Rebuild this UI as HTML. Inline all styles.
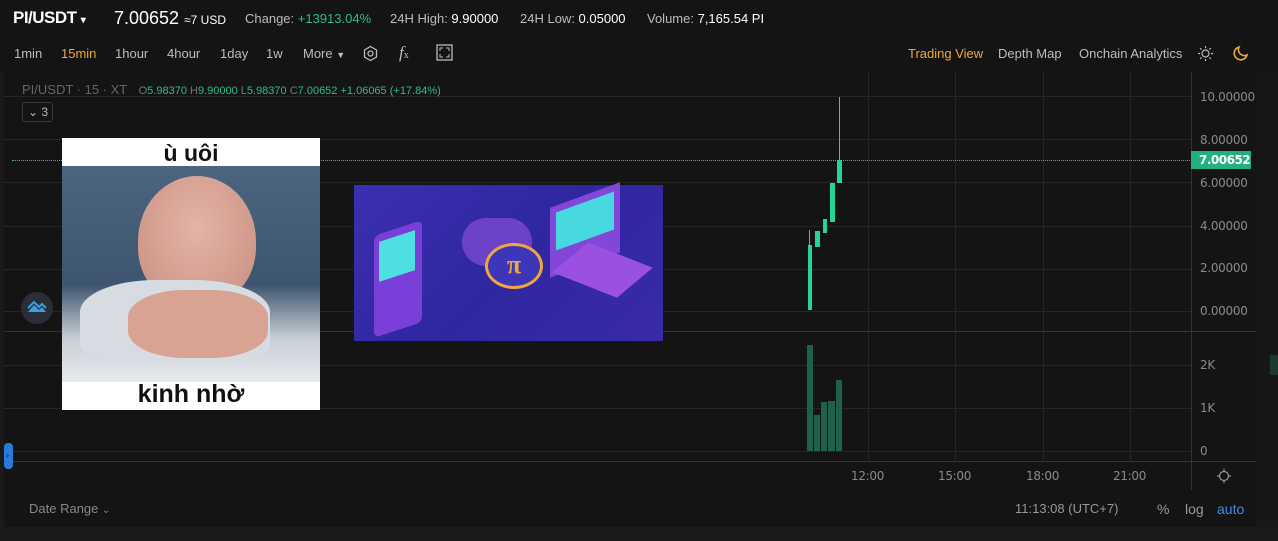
<!DOCTYPE html>
<html><head><meta charset="utf-8"><style>
*{margin:0;padding:0;box-sizing:border-box}
body{width:1278px;height:541px;background:#1a1a1a;font-family:"Liberation Sans",sans-serif;position:relative;overflow:hidden;color:#c9c9c9}
.a{position:absolute;white-space:nowrap}
.t{font-size:13px;color:#bdbdbd}
.g{color:#2ebd85}
.ax{font-size:12px;color:#8a8a8a;font-family:"DejaVu Sans",sans-serif;letter-spacing:-0.3px}
.hl{position:absolute;height:1px;background:#262626}
.vl{position:absolute;width:1px;background:#262626}
</style></head><body>
<div class="a" style="left:0;top:0;width:1278px;height:72px;background:#141414"></div>
<div class="a" style="left:4px;top:72px;width:1252px;height:455px;background:#141414"></div>
<div class="a" style="left:1256px;top:72px;width:22px;height:455px;background:#171717"></div>
<div class="a" style="left:1270px;top:355px;width:8px;height:20px;background:#1d3a30"></div>

<div class="a" style="left:13px;top:8px;font-size:17px;font-weight:bold;color:#fff;letter-spacing:-0.5px">PI/USDT <span style="font-size:10px">▾</span></div>
<div class="a" style="left:114px;top:8px;font-size:18px;color:#fff">7.00652 <span style="font-size:12px">≈7 USD</span></div>
<div class="a t" style="left:245px;top:11px">Change: <span class="g">+13913.04%</span></div>
<div class="a t" style="left:390px;top:11px">24H High: <span style="color:#fff">9.90000</span></div>
<div class="a t" style="left:520px;top:11px">24H Low: <span style="color:#fff">0.05000</span></div>
<div class="a t" style="left:647px;top:11px">Volume: <span style="color:#fff">7,165.54 PI</span></div>

<div class="a t" style="left:14px;top:46px">1min</div>
<div class="a t" style="left:61px;top:46px;color:#f0a93a">15min</div>
<div class="a t" style="left:115px;top:46px">1hour</div>
<div class="a t" style="left:167px;top:46px">4hour</div>
<div class="a t" style="left:220px;top:46px">1day</div>
<div class="a t" style="left:266px;top:46px">1w</div>
<div class="a t" style="left:303px;top:46px">More <span style="font-size:9px">▼</span></div>
<svg class="a" style="left:362px;top:45px" width="17" height="17" viewBox="0 0 17 17"><path d="M8.5 1.5L14.5 5v7L8.5 15.5 2.5 12V5z" fill="none" stroke="#bbb" stroke-width="1.3"/><circle cx="8.5" cy="8.5" r="2.5" fill="none" stroke="#bbb" stroke-width="1.3"/></svg>
<div class="a" style="left:399px;top:43px;font-size:17px;font-style:italic;font-family:'Liberation Serif',serif;color:#bbb">f<span style="font-size:10px;font-style:normal">x</span></div>
<svg class="a" style="left:436px;top:44px" width="17" height="17"><rect x="1" y="1" width="15" height="15" fill="none" stroke="#bbb" stroke-width="1.3"/><path d="M4 7V4h3M10 4h3v3M13 10v3h-3M7 13H4v-3" fill="none" stroke="#bbb"/></svg>

<div class="a t" style="left:908px;top:46px;color:#f0a93a">Trading View</div>
<div class="a t" style="left:998px;top:46px">Depth Map</div>
<div class="a t" style="left:1079px;top:46px">Onchain Analytics</div>
<svg class="a" style="left:1197px;top:45px" width="17" height="17"><circle cx="8.5" cy="8.5" r="3.5" fill="none" stroke="#bbb" stroke-width="1.2"/><path d="M8.5 1v2M8.5 14v2M1 8.5h2M14 8.5h2M3.2 3.2l1.4 1.4M12.4 12.4l1.4 1.4M3.2 13.8l1.4-1.4M12.4 4.6l1.4-1.4" stroke="#bbb" stroke-width="1.2"/></svg>
<svg class="a" style="left:1232px;top:45px" width="17" height="17"><path d="M7 2a6.5 6.5 0 1 0 8 8A6 6 0 0 1 7 2z" fill="none" stroke="#f0a93a" stroke-width="1.6"/></svg>

<!-- grid -->
<div class="hl" style="left:4px;top:96px;width:1187px"></div>
<div class="hl" style="left:4px;top:139px;width:1187px"></div>
<div class="hl" style="left:4px;top:182px;width:1187px"></div>
<div class="hl" style="left:4px;top:226px;width:1187px"></div>
<div class="hl" style="left:4px;top:269px;width:1187px"></div>
<div class="hl" style="left:4px;top:311px;width:1187px"></div>
<div class="hl" style="left:4px;top:331px;width:1252px;background:#333"></div>
<div class="hl" style="left:4px;top:365px;width:1187px"></div>
<div class="hl" style="left:4px;top:408px;width:1187px"></div>
<div class="hl" style="left:4px;top:451px;width:1187px"></div>
<div class="hl" style="left:4px;top:461px;width:1252px;background:#333"></div>
<div class="vl" style="left:868px;top:72px;height:389px"></div>
<div class="vl" style="left:955px;top:72px;height:389px"></div>
<div class="vl" style="left:1043px;top:72px;height:389px"></div>
<div class="vl" style="left:1130px;top:72px;height:389px"></div>
<div class="vl" style="left:1191px;top:72px;height:418px;background:#333"></div>

<div class="a" style="left:12px;top:160px;width:1180px;border-top:1px dotted #2ebd85"></div>
<div class="a" style="left:1191px;top:151px;width:60px;height:18px;background:#22b07d;color:#fff;font-size:12px;font-weight:bold;padding:2px 0 0 8px;font-family:'DejaVu Sans',sans-serif;letter-spacing:-0.5px">7.00652</div>

<div class="a ax" style="left:1200px;top:90px">10.00000</div>
<div class="a ax" style="left:1200px;top:133px">8.00000</div>
<div class="a ax" style="left:1200px;top:176px">6.00000</div>
<div class="a ax" style="left:1200px;top:219px">4.00000</div>
<div class="a ax" style="left:1200px;top:261px">2.00000</div>
<div class="a ax" style="left:1200px;top:304px">0.00000</div>
<div class="a ax" style="left:1200px;top:358px">2K</div>
<div class="a ax" style="left:1200px;top:401px">1K</div>
<div class="a ax" style="left:1200px;top:444px">0</div>
<div class="a ax" style="left:851px;top:469px">12:00</div>
<div class="a ax" style="left:938px;top:469px">15:00</div>
<div class="a ax" style="left:1026px;top:469px">18:00</div>
<div class="a ax" style="left:1113px;top:469px">21:00</div>
<svg class="a" style="left:1216px;top:468px" width="16" height="16"><circle cx="8" cy="8" r="4.5" fill="none" stroke="#999" stroke-width="1.2"/><path d="M8 1v2.5M8 12.5V15M1 8h2.5M12.5 8H15" stroke="#999" stroke-width="1.2"/></svg>

<!-- candles -->
<div class="a" style="left:809px;top:230px;width:1px;height:80px;background:#25d49a"></div>
<div class="a" style="left:808px;top:245px;width:4px;height:65px;background:#25d49a"></div>
<div class="a" style="left:815px;top:231px;width:5px;height:16px;background:#25d49a"></div>
<div class="a" style="left:823px;top:219px;width:4px;height:14px;background:#25d49a"></div>
<div class="a" style="left:830px;top:183px;width:5px;height:39px;background:#25d49a"></div>
<div class="a" style="left:839px;top:97px;width:1px;height:64px;background:#25d49a"></div>
<div class="a" style="left:837px;top:160px;width:5px;height:23px;background:#25d49a"></div>
<!-- volume -->
<div class="a" style="left:807px;top:345px;width:6px;height:106px;background:#1d6149"></div>
<div class="a" style="left:814px;top:415px;width:6px;height:36px;background:#1d6149"></div>
<div class="a" style="left:821px;top:402px;width:6px;height:49px;background:#1d6149"></div>
<div class="a" style="left:828px;top:401px;width:7px;height:50px;background:#1d6149"></div>
<div class="a" style="left:836px;top:380px;width:6px;height:71px;background:#1d6149"></div>

<div class="a" style="left:22px;top:82px;font-size:13px;color:#666">PI/USDT · 15 · XT <span style="font-size:11px;margin-left:8px;color:#777">O<span class="g">5.98370</span> H<span class="g">9.90000</span> L<span class="g">5.98370</span> C<span class="g">7.00652</span> <span class="g">+1.06065 (+17.84%)</span></span></div>
<div class="a" style="left:22px;top:102px;width:31px;height:20px;border:1px solid #3a3a3a;border-radius:3px;font-size:12px;color:#bbb;padding:2px 0 0 5px">⌄ 3</div>

<div class="a" style="left:21px;top:292px;width:32px;height:32px;border-radius:50%;background:#2a2e36"></div>
<svg class="a" style="left:26px;top:298px" width="22" height="20"><path d="M2 14L8 7l5 5 3-3 4 5z" fill="#3aa0e0"/><path d="M2 10L8 4l5 5 3-3 4 4" fill="none" stroke="#3aa0e0" stroke-width="2"/></svg>
<div class="a" style="left:4px;top:443px;width:9px;height:26px;border-radius:4px;background:#2a7ad8;color:#123;font-size:9px;padding:7px 0 0 2px">›</div>

<!-- baby meme -->
<div class="a" style="left:62px;top:138px;width:258px;height:272px;background:#fff"></div>
<div class="a" style="left:62px;top:166px;width:258px;height:216px;background:linear-gradient(180deg,#4b6480,#3e556e 55%,#c9cfd6 80%,#e8eaee)"></div>
<div class="a" style="left:138px;top:176px;width:118px;height:130px;border-radius:50% 50% 45% 45%;background:radial-gradient(ellipse at 50% 40%,#e4b4a6,#c78f80)"></div>
<div class="a" style="left:80px;top:280px;width:190px;height:80px;border-radius:40% 40% 20% 20%;background:#d7dce3"></div>
<div class="a" style="left:128px;top:290px;width:140px;height:68px;border-radius:40%;background:#d9a394"></div>
<div class="a" style="left:62px;top:138px;width:258px;text-align:center;font-size:23px;font-weight:bold;color:#111;top:140px">ù uôi</div>
<div class="a" style="left:62px;top:380px;width:258px;text-align:center;font-size:25px;font-weight:bold;color:#111">kinh nhờ</div>

<!-- pi image -->
<div class="a" style="left:354px;top:185px;width:309px;height:156px;background:linear-gradient(135deg,#3c2fb0,#2e27a0 50%,#3a2aa8)"></div>
<div class="a" style="left:374px;top:228px;width:48px;height:102px;border-radius:6px;background:#7a3fd8;transform:skewY(-18deg)"></div>
<div class="a" style="left:379px;top:236px;width:36px;height:40px;background:#4ee0e0;transform:skewY(-18deg)"></div>
<div class="a" style="left:550px;top:195px;width:70px;height:70px;background:#8246d8;transform:skewY(-20deg)"></div>
<div class="a" style="left:556px;top:202px;width:58px;height:38px;background:#48d8e0;transform:skewY(-20deg)"></div>
<div class="a" style="left:555px;top:255px;width:95px;height:30px;background:#9a50e0;transform:skewX(-50deg) skewY(15deg)"></div>
<div class="a" style="left:462px;top:218px;width:70px;height:48px;border-radius:30px;background:#7a4ad0;opacity:.8"></div>
<div class="a" style="left:485px;top:243px;width:58px;height:46px;border-radius:50%;border:3px solid #f0a640;background:#3d36b8;color:#f0a640;font-size:26px;font-weight:bold;text-align:center;line-height:38px;font-family:'Liberation Serif',serif">π</div>

<div class="a" style="left:29px;top:501px;font-size:13px;color:#888">Date Range <span style="font-size:10px">⌄</span></div>
<div class="a" style="left:1015px;top:501px;font-size:13px;color:#999">11:13:08 (UTC+7)</div>
<div class="a" style="left:1157px;top:501px;font-size:14px;color:#999">%</div>
<div class="a" style="left:1185px;top:501px;font-size:14px;color:#999">log</div>
<div class="a" style="left:1217px;top:501px;font-size:14px;color:#3a8ee6">auto</div>
</body></html>
